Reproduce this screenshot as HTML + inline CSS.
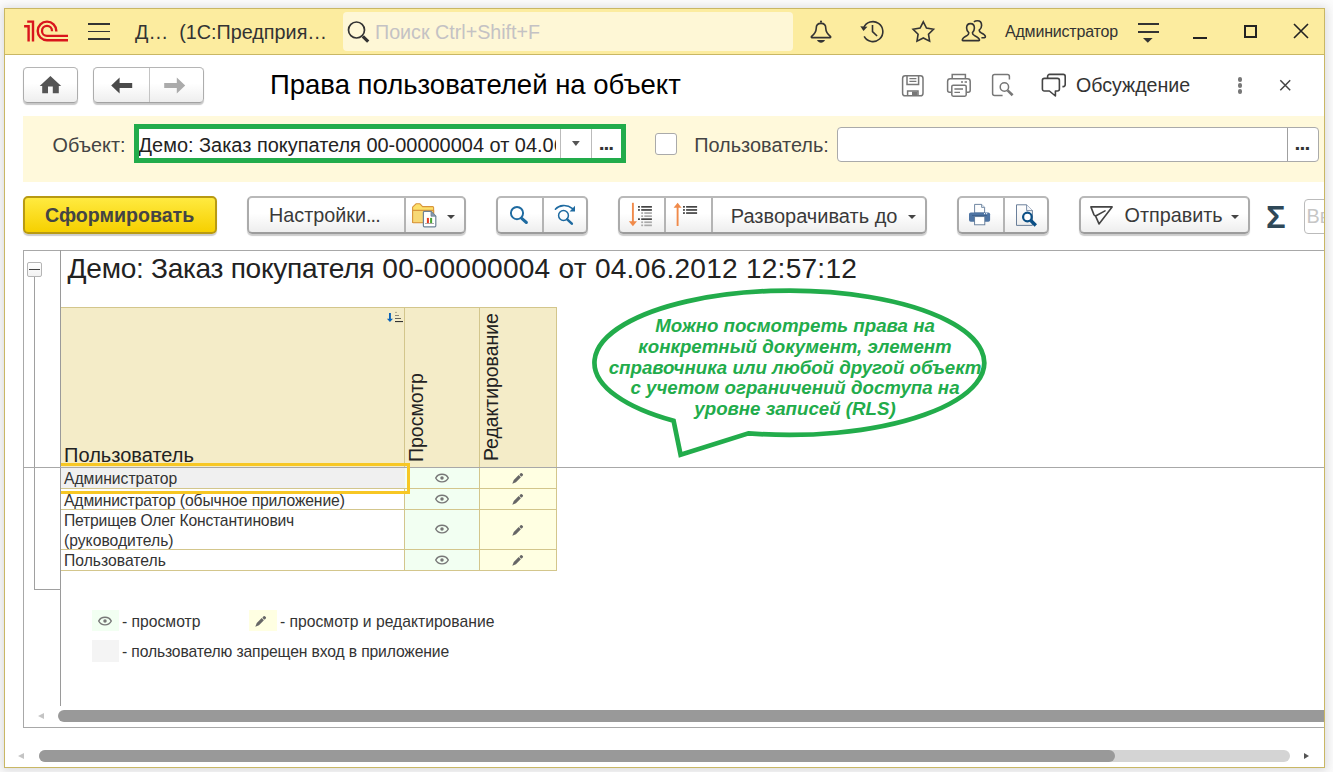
<!DOCTYPE html>
<html lang="ru">
<head>
<meta charset="utf-8">
<title>Права пользователей на объект</title>
<style>
html,body{margin:0;padding:0;}
body{width:1333px;height:772px;overflow:hidden;background:#fcfcfc;font-family:"Liberation Sans",sans-serif;color:#222;position:relative;}
.abs{position:absolute;}
#win{position:absolute;left:4px;top:8px;width:1319px;height:758px;background:#fff;border:1px solid #c9b764;box-shadow:0 1px 9px 2px rgba(60,60,72,.17);overflow:hidden;}
#inner{position:absolute;left:-5px;top:-9px;width:1333px;height:772px;}
#tbar{left:5px;top:9px;width:1320px;height:45px;background:#fcec9f;border-bottom:1px solid #c9b764;}
.t{position:absolute;white-space:nowrap;line-height:1;}
.btn{position:absolute;box-sizing:border-box;border:2px solid #ababab;border-top-color:#b9b9b9;border-bottom-color:#9c9c9c;border-radius:5px;background:linear-gradient(#ffffff 45%,#eeeeee);box-shadow:0 1.5px 1px rgba(0,0,0,.2);}
.btn.n{border-width:1px;border-color:#adadad;border-top-color:#b5b5b5;border-bottom-color:#a2a2a2;border-radius:4.5px;box-shadow:0 1.2px 1px rgba(0,0,0,.22);}
.sep{position:absolute;width:2px;background:#b4b4b4;}
svg{position:absolute;overflow:visible;}
.tri{width:0;height:0;border-left:4.4px solid transparent;border-right:4.4px solid transparent;border-top:4.6px solid #444;}
.hl{position:absolute;height:1px;}
.vl{position:absolute;width:1px;}
</style>
</head>
<body>
<div id="win"><div id="inner">

<!-- ===== title bar ===== -->
<div class="abs" id="tbar"></div>
<div class="abs" style="left:343px;top:12px;width:450px;height:39px;background:#fef7d6;border-radius:4px;"></div>

<!-- 1C logo -->
<svg style="left:22px;top:19px;" width="48" height="24" viewBox="0 0 48 24">
<g fill="none" stroke="#d9151c" stroke-width="2.4">
<path d="M2.1 7.3 L6.6 7.3 L6.6 22.6"/>
<path d="M5.2 2.6 L11 2.6 L11 22.6"/>
<path d="M34.3 12.4 L34.3 11.9 A9.3 9.3 0 1 0 25 21.2 L46 21.2"/>
<path d="M30 12.2 L30 11.9 A5 5 0 1 0 25 16.9 L46 16.9" stroke-width="2.3"/>
</g>
</svg>
<!-- hamburger -->
<div class="abs" style="left:88px;top:23px;width:22px;height:1.6px;background:#333;"></div>
<div class="abs" style="left:88px;top:30.6px;width:22px;height:1.6px;background:#333;"></div>
<div class="abs" style="left:88px;top:38.2px;width:22px;height:1.6px;background:#333;"></div>
<!-- search magnifier -->
<svg style="left:345px;top:19px;" width="28" height="26" viewBox="0 0 28 26">
<circle cx="11.5" cy="11" r="8" fill="none" stroke="#333" stroke-width="1.7"/>
<path d="M17.8 17.4 L23.2 22.6" stroke="#333" stroke-width="3.2" stroke-linecap="butt"/>
</svg>
<!-- bell -->
<svg style="left:808px;top:19px;" width="26" height="26" viewBox="0 0 26 26">
<circle cx="13" cy="2.7" r="1.1" fill="#333"/>
<path d="M8.2 9.4 C8.2 6 10.2 4.4 13 4.4 C15.8 4.4 17.8 6 17.8 9.4 C17.8 13.2 19.4 14.8 22.4 17.4 C22.9 17.9 22.7 18.6 22 18.6 L4 18.6 C3.3 18.6 3.1 17.9 3.6 17.4 C6.6 14.8 8.2 13.2 8.2 9.4 Z" fill="none" stroke="#333" stroke-width="1.6" stroke-linejoin="round"/>
<path d="M8.9 21.1 L17.1 21.1 C16 23 14.6 23.8 13 23.8 C11.4 23.8 10 23 8.9 21.1 Z" fill="#333"/>
</svg>
<!-- history -->
<svg style="left:858px;top:18px;" width="28" height="28" viewBox="0 0 28 28">
<path d="M5.62 10.03 A9.95 9.95 0 1 1 6.17 18.38" fill="none" stroke="#333" stroke-width="1.6"/>
<path d="M2.3 8.2 L9.4 8.7 L5.5 13 Z" fill="#333"/>
<path d="M14.5 7.1 L14.5 13.7 L19.1 18" fill="none" stroke="#333" stroke-width="1.6"/>
</svg>
<!-- star -->
<svg style="left:909.5px;top:18.5px;" width="26" height="26" viewBox="0 0 26 26">
<path d="M13.3 2.8 L16.5 9.1 L23.5 10.2 L18.5 15.2 L19.6 22.2 L13.3 19.0 L7.0 22.2 L8.1 15.2 L3.1 10.2 L10.1 9.1 Z" fill="none" stroke="#333" stroke-width="1.6" stroke-linejoin="miter"/>
</svg>
<!-- users -->
<svg style="left:960px;top:19px;" width="28" height="26" viewBox="0 0 28 26">
<path d="M13.9 2.9 C14.8 2.2 16 1.8 17.4 1.8 C20 1.8 21.6 3.8 21.6 6.4 C21.6 8.4 20.6 10 19.2 11.2 C19.2 12.6 19.8 13.2 21.4 14 C24 15.2 25.4 16 25.4 17.8 C25.4 18.4 25 18.8 24.4 18.8 L21.4 18.8" fill="none" stroke="#333" stroke-width="1.6" stroke-linejoin="round"/>
<path d="M10.5 4.6 C13 4.6 14.4 6.6 14.4 9 C14.4 11 13.6 12.6 12.4 13.8 C12.4 15.2 13 15.8 14.6 16.6 C17.6 18 19.4 18.8 19.5 21 C19.5 21.4 19.3 21.6 18.9 21.6 L2.9 21.6 C2.5 21.6 2.3 21.4 2.3 21 C2.4 18.8 4.2 18 7 16.6 C8.4 15.8 8.8 15.2 8.8 13.8 C7.6 12.6 6.6 11 6.6 9 C6.6 6.6 8 4.6 10.5 4.6 Z" fill="none" stroke="#333" stroke-width="1.6" stroke-linejoin="round"/>
</svg>
<!-- menu -->
<div class="abs" style="left:1137.5px;top:23px;width:21px;height:1.8px;background:#333;"></div>
<div class="abs" style="left:1137.5px;top:31.3px;width:21px;height:1.8px;background:#333;"></div>
<svg style="left:1143.4px;top:38.2px;" width="10" height="5" viewBox="0 0 10 5"><path d="M0 0 L9.6 0 L4.8 4.8 Z" fill="#333"/></svg>
<!-- window controls -->
<div class="abs" style="left:1193.3px;top:36.6px;width:13.6px;height:2.2px;background:#222;"></div>
<div class="abs" style="left:1244px;top:25px;width:13px;height:13px;box-sizing:border-box;border:2px solid #222;"></div>
<svg style="left:1293px;top:23px;" width="16" height="16" viewBox="0 0 16 16"><path d="M1 1 L15 15 M15 1 L1 15" stroke="#222" stroke-width="1.6"/></svg>

<div class="t" style="left:135px;top:22.5px;font-size:19.8px;color:#333;">Д…&nbsp; (1С:Предприя…</div>
<div class="t" style="left:375px;top:22.5px;font-size:19.7px;color:#c4c2c4;">Поиск Ctrl+Shift+F</div>
<div class="t" style="left:1005px;top:24px;font-size:16px;color:#333;letter-spacing:-0.2px;">Администратор</div>

<!-- ===== nav row ===== -->
<div class="btn n" style="left:23px;top:67px;width:55px;height:35.6px;"></div>
<div class="btn n" style="left:93px;top:67px;width:111px;height:35.6px;"></div>
<div class="sep" style="left:149px;top:68px;height:34px;width:1px;background:#c4c4c4;"></div>

<svg style="left:39px;top:75px;" width="23" height="19" viewBox="0 0 23 19">
<path d="M11.4 1.1 L22.2 11 L19.8 11 L19.8 18.2 L13.8 18.2 L13.8 11.6 L9 11.6 L9 18.2 L3.2 18.2 L3.2 11 L0.7 11 Z" fill="#555"/>
</svg>
<svg style="left:111px;top:77px;" width="22" height="17" viewBox="0 0 22 17">
<path d="M0.2 8.4 L8.6 0.4 L8.6 5.9 L21.2 5.9 L21.2 10.9 L8.6 10.9 L8.6 16.4 Z" fill="#4a4a4a"/>
</svg>
<svg style="left:164px;top:77px;" width="22" height="17" viewBox="0 0 22 17">
<path d="M21.2 8.4 L12.8 0.4 L12.8 5.9 L0.2 5.9 L0.2 10.9 L12.8 10.9 L12.8 16.4 Z" fill="#ababab"/>
</svg>
<!-- save -->
<svg style="left:901px;top:74px;" width="24" height="24" viewBox="0 0 24 24">
<g fill="none" stroke="#777" stroke-width="1.5">
<rect x="1.6" y="1.8" width="20.4" height="20" rx="2.6"/>
<path d="M6 2 L6 10.4 L17.6 10.4 L17.6 2"/>
<path d="M8.4 4.6 L15.4 4.6 M8.4 7.4 L15.4 7.4" stroke-width="1.3"/>
<path d="M6.6 21.6 L6.6 17 L17 17 L17 21.6"/>
</g>
<rect x="11" y="17.6" width="5.4" height="3.8" fill="#777"/>
</svg>
<!-- printer -->
<svg style="left:946px;top:73px;" width="26" height="25" viewBox="0 0 26 25">
<g fill="none" stroke="#777" stroke-width="1.5">
<path d="M6.2 5.6 L6.2 1.6 L19.4 1.6 L19.4 5.6"/>
<path d="M5.6 19.2 L3.6 19.2 C2.4 19.2 1.6 18.4 1.6 17.2 L1.6 8.4 C1.6 6.8 2.6 5.8 4.2 5.8 L21.6 5.8 C23.2 5.8 24.2 6.8 24.2 8.4 L24.2 17.2 C24.2 18.4 23.4 19.2 22.2 19.2 L20.4 19.2"/>
<rect x="5.8" y="12.2" width="14.4" height="11" rx="1.4"/>
<path d="M8.4 16 L17 16 M8.4 19.4 L14 19.4 M15 9 L17 9 M18.6 9 L21 9" stroke-width="1.3"/>
</g>
</svg>
<!-- preview -->
<svg style="left:991px;top:73px;" width="24" height="25" viewBox="0 0 24 25">
<g fill="none" stroke="#777">
<path d="M11.6 22.6 L3.6 22.6 C2.4 22.6 1.6 21.8 1.6 20.6 L1.6 3.6 C1.6 2.4 2.4 1.6 3.6 1.6 L16.4 1.6 C17.6 1.6 18.4 2.4 18.4 3.6 L18.4 6.6" stroke-width="1.5"/>
<circle cx="13.4" cy="14" r="4.2" stroke-width="1.5"/>
<path d="M16.6 17.4 L21.6 22.2" stroke-width="2.6"/>
</g>
</svg>
<!-- chat -->
<svg style="left:1041px;top:73.4px;" width="26" height="26" viewBox="0 0 26 26">
<g fill="none" stroke="#444" stroke-width="1.6" stroke-linejoin="round">
<path d="M6.6 5.2 L6.6 3.4 C6.6 2.2 7.4 1.4 8.6 1.4 L22.2 1.4 C23.4 1.4 24.2 2.2 24.2 3.4 L24.2 11.6 C24.2 12.8 23.4 13.6 22.2 13.6 L21.4 13.6"/>
<path d="M3.4 5.4 L16.4 5.4 C17.6 5.4 18.4 6.2 18.4 7.4 L18.4 16 C18.4 17.2 17.6 18 16.4 18 L14.4 18 L14.4 23 L8.4 18 L3.4 18 C2.2 18 1.4 17.2 1.4 16 L1.4 7.4 C1.4 6.2 2.2 5.4 3.4 5.4 Z"/>
</g>
</svg>
<!-- kebab -->
<div class="abs" style="left:1237.5px;top:77px;width:4.8px;height:4.8px;border-radius:50%;background:#777;"></div>
<div class="abs" style="left:1237.5px;top:83.1px;width:4.8px;height:4.8px;border-radius:50%;background:#777;"></div>
<div class="abs" style="left:1237.5px;top:89.3px;width:4.8px;height:4.8px;border-radius:50%;background:#777;"></div>
<svg style="left:1280px;top:80.3px;" width="11" height="11" viewBox="0 0 11 11"><path d="M0.3 0.3 L10.2 10.2 M10.2 0.3 L0.3 10.2" stroke="#444" stroke-width="1.5"/></svg>

<div class="t" style="left:270px;top:71.4px;font-size:27.5px;color:#000;">Права пользователей на объект</div>
<div class="t" style="left:1076px;top:76.3px;font-size:19.6px;color:#333;">Обсуждение</div>

<!-- ===== filter band ===== -->
<div class="abs" style="left:23px;top:116px;width:1302px;height:66px;background:#fff9db;"></div>
<div class="t" style="left:52.6px;top:135.7px;font-size:19.8px;color:#444;">Объект:</div>
<div class="abs" style="left:134px;top:124px;width:492px;height:39px;box-sizing:border-box;border:5px solid #22ac4b;background:#fff;"></div>
<div class="t" style="left:138.6px;top:135.7px;font-size:19.95px;color:#222;width:417.4px;overflow:hidden;">Демо: Заказ покупателя 00-00000004 от 04.06.2012</div>
<div class="sep" style="left:560px;top:129px;height:29px;width:1px;background:#bbb;"></div>
<div class="sep" style="left:591px;top:129px;height:29px;width:1px;background:#bbb;"></div>
<div class="abs" style="left:655px;top:133px;width:22px;height:22px;box-sizing:border-box;border:1px solid #aaa;border-radius:3px;background:#fff;"></div>
<div class="t" style="left:694.2px;top:135.7px;font-size:19.9px;color:#444;">Пользователь:</div>
<div class="abs" style="left:837px;top:127px;width:482px;height:35px;box-sizing:border-box;border:1px solid #aaa;border-radius:4px;background:#fff;"></div>
<div class="sep" style="left:1287px;top:128px;height:33px;width:1px;background:#a0a0a0;"></div>

<svg style="left:571.6px;top:141.2px;" width="8" height="5" viewBox="0 0 8 5"><path d="M0 0 L7.8 0 L3.9 5 Z" fill="#555"/></svg>
<div class="t" style="left:598.8px;top:132.3px;font-size:21px;font-weight:bold;color:#333;letter-spacing:-1.14px;">...</div>
<div class="t" style="left:1294.4px;top:132.3px;font-size:21px;font-weight:bold;color:#333;letter-spacing:-0.84px;">...</div>


<!-- ===== command bar ===== -->
<div class="btn" style="left:23px;top:196px;width:194px;height:37.6px;background:linear-gradient(#ffea40,#f6d000);border-color:#b89a12;"></div>
<div class="t" style="left:45px;top:205.5px;font-size:19.6px;font-weight:bold;color:#444;">Сформировать</div>
<div class="btn" style="left:247px;top:196px;width:219px;height:37.6px;"></div>
<div class="sep" style="left:404px;top:198px;height:34px;"></div>
<div class="t" style="left:269px;top:205.5px;font-size:19.8px;color:#3a3a3a;">Настройки<span style="letter-spacing:-0.9px">...</span></div>
<div class="btn" style="left:496px;top:196px;width:92px;height:37.6px;"></div>
<div class="sep" style="left:542px;top:198px;height:34px;"></div>
<div class="btn" style="left:618px;top:196px;width:309px;height:37.6px;"></div>
<div class="sep" style="left:664px;top:198px;height:34px;"></div>
<div class="sep" style="left:711px;top:198px;height:34px;"></div>
<div class="t" style="left:730.8px;top:205.5px;font-size:20px;color:#3a3a3a;">Разворачивать до</div>
<div class="btn" style="left:957px;top:196px;width:92px;height:37.6px;"></div>
<div class="sep" style="left:1003px;top:198px;height:34px;"></div>
<div class="btn" style="left:1079px;top:196px;width:171px;height:37.6px;"></div>
<div class="t" style="left:1124.5px;top:205.5px;font-size:19.8px;color:#3a3a3a;">Отправить</div>
<div class="t" style="left:1266.2px;top:201.6px;font-size:31.2px;font-weight:bold;color:#2f4858;transform-origin:0 50%;transform:scaleX(1.05);">Σ</div>
<div class="abs" style="left:1304px;top:199px;width:60px;height:35px;box-sizing:border-box;border:1px solid #bbb;border-radius:4px;background:#fff;"></div>
<div class="t" style="left:1306.5px;top:207px;font-size:19.8px;color:#c6c6c6;">Вв</div>

<!-- folder with chart -->
<svg style="left:411px;top:202px;" width="27" height="26" viewBox="0 0 27 26">
<path d="M1.6 20.4 L1.6 5.2 L5 1.8 L9 1.8 L11.6 4.6 L21.6 4.6 C22.2 4.6 22.6 5 22.6 5.6 L22.6 20.4 Z" fill="#fde06a" stroke="#d8953c" stroke-width="1.1" stroke-linejoin="round"/>
<path d="M1.6 8.4 L22.6 8.4 L22.6 20.4 C22.6 20.6 22.4 20.8 22.2 20.8 L2.4 20.8 C1.9 20.8 1.6 20.5 1.6 20 Z" fill="#f7d876" stroke="#d8953c" stroke-width="1.1" stroke-linejoin="round"/>
<path d="M13.4 9.4 L20 9.4 L24.8 14.2 L24.8 23.8 C24.8 24.4 24.4 24.8 23.8 24.8 L13.4 24.8 C12.8 24.8 12.4 24.4 12.4 23.8 L12.4 10.4 C12.4 9.8 12.8 9.4 13.4 9.4 Z" fill="#fff" stroke="#6d8296" stroke-width="1.2"/>
<path d="M20 9.4 L20 14.2 L24.8 14.2 Z" fill="#8a9cae" stroke="#6d8296" stroke-width="0.8"/>
<rect x="15.9" y="15.9" width="2" height="5.3" fill="#e8391f"/>
<rect x="19.1" y="15.9" width="2" height="5.3" fill="#4aa535"/>
<rect x="14" y="21" width="9" height="0.8" fill="#999"/>
</svg>
<div class="abs tri" style="left:447px;top:214.6px;"></div>
<!-- search -->
<svg style="left:509px;top:204px;" width="22" height="22" viewBox="0 0 22 22">
<circle cx="8" cy="9.1" r="6.1" fill="none" stroke="#1e6aa0" stroke-width="1.9"/>
<path d="M12.7 14.4 L17.4 18.5" stroke="#1e6aa0" stroke-width="3" stroke-linecap="round"/>
</svg>
<svg style="left:553px;top:202px;" width="26" height="26" viewBox="0 0 26 26">
<circle cx="10.5" cy="13.5" r="4.9" fill="none" stroke="#1e6aa0" stroke-width="1.5"/>
<path d="M14.2 17.4 L18.8 21.6" stroke="#1e6aa0" stroke-width="2.6" stroke-linecap="round"/>
<path d="M2.4 7.2 C6 3 13.6 2 19.6 6.6" fill="none" stroke="#1e6aa0" stroke-width="1.6" stroke-linecap="round"/>
<path d="M22 3.8 L22 9.6 L16.6 9.6 Z" fill="#1e6aa0"/>
</svg>
<!-- expand / collapse -->
<svg style="left:627px;top:201px;" width="30" height="28" viewBox="0 0 30 28">
<path d="M5.9 1.8 L5.9 21" stroke="#f08a4a" stroke-width="1.9"/>
<path d="M1.8 20.2 L10 20.2 L5.9 25.2 Z" fill="#f08a4a"/>
<g fill="#444">
<rect x="11" y="5" width="1.9" height="1.7"/><rect x="14.2" y="5" width="10.7" height="1.7"/>
<rect x="11" y="8.1" width="1.9" height="1.7"/><rect x="14.2" y="8.1" width="10.7" height="1.7"/>
<rect x="11" y="17.3" width="1.9" height="1.7"/><rect x="14.2" y="17.3" width="10.7" height="1.7"/>
</g>
<g fill="#aaa">
<rect x="14.2" y="11.2" width="1.9" height="1.7"/><rect x="17.3" y="11.2" width="7.6" height="1.7"/>
<rect x="14.2" y="14.3" width="1.9" height="1.7"/><rect x="17.3" y="14.3" width="7.6" height="1.7"/>
<rect x="14.2" y="20.4" width="1.9" height="1.7"/><rect x="17.3" y="20.4" width="7.6" height="1.7"/>
<rect x="14.2" y="23.5" width="1.9" height="1.7"/><rect x="17.3" y="23.5" width="7.6" height="1.7"/>
</g>
</svg>
<svg style="left:672px;top:201px;" width="30" height="28" viewBox="0 0 30 28">
<path d="M5.6 6 L5.6 25" stroke="#f08a4a" stroke-width="1.9"/>
<path d="M1.6 6.8 L9.6 6.8 L5.6 1.8 Z" fill="#f08a4a"/>
<g fill="#444">
<rect x="11" y="5" width="1.9" height="1.7"/><rect x="14.1" y="5" width="11" height="1.7"/>
<rect x="11" y="8.1" width="1.9" height="1.7"/><rect x="14.1" y="8.1" width="11" height="1.7"/>
<rect x="11" y="11.2" width="1.9" height="1.7"/><rect x="14.1" y="11.2" width="11" height="1.7"/>
</g>
</svg>
<div class="abs tri" style="left:907.5px;top:214.6px;"></div>
<!-- print -->
<svg style="left:967px;top:202px;" width="26" height="26" viewBox="0 0 26 26">
<path d="M7.6 2.4 L14.6 2.4 L17.6 5.4 L17.6 11 L7.6 11 Z" fill="#fdfdfd" stroke="#5f7896" stroke-width="0.9"/>
<path d="M14.6 2.4 L14.6 5.4 L17.6 5.4" fill="#e4ecf5" stroke="#5f7896" stroke-width="0.8"/>
<rect x="2" y="10.4" width="21.1" height="9.4" rx="1.8" fill="#4e74a3"/>
<rect x="5" y="13.1" width="15" height="0.9" fill="#3c5f8c"/>
<rect x="7.6" y="14.6" width="10.2" height="8.2" fill="#fff" stroke="#5f7896" stroke-width="0.9"/>
<rect x="17" y="11.1" width="1.1" height="1.1" fill="#fff"/><rect x="19.1" y="11.1" width="1.1" height="1.1" fill="#fff"/>
</svg>
<!-- print preview -->
<svg style="left:1014px;top:201px;" width="26" height="28" viewBox="0 0 26 28">
<defs><linearGradient id="dg" x1="0" y1="0" x2="0" y2="1"><stop offset="0" stop-color="#fff"/><stop offset="1" stop-color="#eeeeee"/></linearGradient></defs>
<path d="M2.5 3.8 L12.6 3.8 L18.4 9.6 L18.4 24.4 L2.5 24.4 Z" fill="url(#dg)" stroke="#5a7290" stroke-width="0.9"/>
<path d="M12.6 3.8 L12.6 9.6 L18.4 9.6" fill="#f4f7fb" stroke="#5a7290" stroke-width="0.8"/>
<circle cx="13.4" cy="16" r="4.3" fill="#fff" stroke="#0b4f85" stroke-width="2.2"/>
<path d="M16.8 19.6 L21.8 24.4" stroke="#0b4f85" stroke-width="3.4" stroke-linecap="butt"/>
</svg>
<!-- send -->
<svg style="left:1088px;top:203px;" width="27" height="24" viewBox="0 0 27 24">
<path d="M2.9 3.9 L24.1 3.9 L11 20.9 L7.5 12.9 M2.9 3.9 L5.9 11.6 Q6.9 13.4 9 12.3 L17 7.9" fill="none" stroke="#444" stroke-width="1.6" stroke-linejoin="round" stroke-linecap="round"/>
</svg>
<div class="abs tri" style="left:1230.6px;top:214.6px;"></div>


<!-- ===== report ===== -->
<!--REPORT-START-->
<!-- frame -->
<div class="hl" style="left:23px;top:250px;width:1310px;background:#a8a8a8;"></div>
<div class="vl" style="left:23px;top:250px;height:478px;background:#a8a8a8;"></div>
<div class="hl" style="left:23px;top:727px;width:1310px;background:#a8a8a8;"></div>
<div class="vl" style="left:60px;top:250px;height:456px;background:#9a9a9a;"></div>
<!-- group lines -->
<div class="vl" style="left:34px;top:276px;height:314px;background:#a0a0a0;"></div>
<div class="hl" style="left:34px;top:589px;width:27px;background:#a0a0a0;"></div>
<div class="abs" style="left:27px;top:262px;width:15px;height:15px;box-sizing:border-box;border:1px solid #b5b5b5;border-radius:2px;background:linear-gradient(#fff,#f2f2f2);"></div>
<div class="hl" style="left:29px;top:269px;width:11px;background:#444;"></div>

<div class="t" style="left:67.6px;top:255px;font-size:28.1px;color:#222;"><span style="letter-spacing:-0.3px">Демо: Заказ покупателя</span><span style="letter-spacing:0.235px"> 00-00000004 от 04.06.2012 12:57:12</span></div>

<!-- table header -->
<div class="abs" style="left:61px;top:307px;width:496px;height:160px;background:#f4ecc8;"></div>
<div class="hl" style="left:61px;top:307px;width:496px;background:#d3c68c;"></div>
<div class="vl" style="left:404px;top:307px;height:264px;background:#d3c68c;"></div>
<div class="vl" style="left:479px;top:307px;height:264px;background:#d3c68c;"></div>
<div class="vl" style="left:556px;top:307px;height:264px;background:#d3c68c;"></div>
<div class="t" style="left:64.1px;top:444.7px;font-size:20px;color:#222;">Пользователь</div>
<div class="t" id="vh1" style="left:406.4px;top:462.2px;font-size:20.3px;color:#222;transform-origin:0 0;transform:rotate(-90deg) scaleX(.96);">Просмотр</div>
<div class="t" id="vh2" style="left:481.3px;top:460.9px;font-size:20.3px;color:#222;transform-origin:0 0;transform:rotate(-90deg) scaleX(.957);">Редактирование</div>

<svg style="left:386px;top:311px;" width="18" height="12" viewBox="0 0 18 12">
<rect x="3" y="2" width="1.9" height="6.4" fill="#0b63b8"/>
<path d="M0.9 7.8 L7 7.8 L3.95 11 Z" fill="#0b63b8"/>
<rect x="9" y="0.9" width="2" height="1" fill="#b0aa90"/>
<rect x="9" y="4" width="4" height="1" fill="#8a8676"/>
<rect x="9" y="7" width="6" height="1" fill="#66645a"/>
<rect x="9" y="10" width="8" height="1.1" fill="#333"/>
</svg>
<!-- body cells -->
<div class="abs" style="left:61px;top:467px;width:344px;height:21px;background:#f0f0f0;"></div>
<div class="abs" style="left:405px;top:467px;width:74px;height:104px;background:#f2fff2;"></div>
<div class="abs" style="left:480px;top:467px;width:76px;height:104px;background:#ffffe2;"></div>
<div class="hl" style="left:61px;top:488px;width:496px;background:#d3c68c;"></div>
<div class="hl" style="left:61px;top:509px;width:496px;background:#d3c68c;"></div>
<div class="hl" style="left:61px;top:549px;width:496px;background:#d3c68c;"></div>
<div class="hl" style="left:61px;top:570px;width:496px;background:#d3c68c;"></div>
<div class="hl" style="left:23px;top:467px;width:1310px;background:#a8a8a8;"></div>
<div class="t" style="left:64px;top:471.1px;font-size:15.7px;color:#333;">Администратор</div>
<div class="t" style="left:64px;top:492.8px;font-size:15.7px;letter-spacing:-0.12px;color:#333;">Администратор (обычное приложение)</div>
<div class="t" style="left:64px;top:512.8px;font-size:15.7px;letter-spacing:-0.2px;color:#333;">Петрищев Олег Константинович</div>
<div class="t" style="left:64px;top:532.7px;font-size:15.7px;color:#333;">(руководитель)</div>
<div class="t" style="left:64px;top:553.1px;font-size:15.7px;color:#333;">Пользователь</div>
<svg style="left:435.2px;top:473px;" width="14" height="10" viewBox="0 0 14 10"><path d="M0.7 5 C3.2 -0.1 10.8 -0.1 13.3 5 C10.8 10.1 3.2 10.1 0.7 5 Z" fill="none" stroke="#777" stroke-width="1.4"/><circle cx="7" cy="5" r="1.75" fill="#777"/></svg>
<svg style="left:512.3px;top:473.4px;" width="11" height="11" viewBox="0 0 11 11"><g transform="translate(0.3,10.7) rotate(-45)" fill="#666"><path d="M0 0 L3.6 -1.55 L10.6 -1.55 L10.6 1.55 L3.6 1.55 Z"/><rect x="11.3" y="-1.55" width="2.9" height="3.1" rx="0.9"/></g></svg>
<svg style="left:435.2px;top:494px;" width="14" height="10" viewBox="0 0 14 10"><path d="M0.7 5 C3.2 -0.1 10.8 -0.1 13.3 5 C10.8 10.1 3.2 10.1 0.7 5 Z" fill="none" stroke="#777" stroke-width="1.4"/><circle cx="7" cy="5" r="1.75" fill="#777"/></svg>
<svg style="left:512.3px;top:494.4px;" width="11" height="11" viewBox="0 0 11 11"><g transform="translate(0.3,10.7) rotate(-45)" fill="#666"><path d="M0 0 L3.6 -1.55 L10.6 -1.55 L10.6 1.55 L3.6 1.55 Z"/><rect x="11.3" y="-1.55" width="2.9" height="3.1" rx="0.9"/></g></svg>
<svg style="left:435.2px;top:524.1px;" width="14" height="10" viewBox="0 0 14 10"><path d="M0.7 5 C3.2 -0.1 10.8 -0.1 13.3 5 C10.8 10.1 3.2 10.1 0.7 5 Z" fill="none" stroke="#777" stroke-width="1.4"/><circle cx="7" cy="5" r="1.75" fill="#777"/></svg>
<svg style="left:512.3px;top:524.5px;" width="11" height="11" viewBox="0 0 11 11"><g transform="translate(0.3,10.7) rotate(-45)" fill="#666"><path d="M0 0 L3.6 -1.55 L10.6 -1.55 L10.6 1.55 L3.6 1.55 Z"/><rect x="11.3" y="-1.55" width="2.9" height="3.1" rx="0.9"/></g></svg>
<svg style="left:435.2px;top:554.9px;" width="14" height="10" viewBox="0 0 14 10"><path d="M0.7 5 C3.2 -0.1 10.8 -0.1 13.3 5 C10.8 10.1 3.2 10.1 0.7 5 Z" fill="none" stroke="#777" stroke-width="1.4"/><circle cx="7" cy="5" r="1.75" fill="#777"/></svg>
<svg style="left:512.3px;top:555.3px;" width="11" height="11" viewBox="0 0 11 11"><g transform="translate(0.3,10.7) rotate(-45)" fill="#666"><path d="M0 0 L3.6 -1.55 L10.6 -1.55 L10.6 1.55 L3.6 1.55 Z"/><rect x="11.3" y="-1.55" width="2.9" height="3.1" rx="0.9"/></g></svg>
<!-- selection -->
<div class="abs" style="left:61px;top:462.5px;width:349px;height:31.5px;box-sizing:border-box;border:3px solid #f7c724;border-left-width:0;"></div>

<!-- legend -->
<div class="abs" style="left:92px;top:610px;width:27px;height:21px;background:#f2fff2;"></div>
<div class="abs" style="left:249px;top:610px;width:28px;height:21px;background:#ffffe2;"></div>
<div class="abs" style="left:92px;top:640px;width:27px;height:22px;background:#f4f4f4;"></div>
<svg style="left:97.8px;top:616.2px;" width="14" height="10" viewBox="0 0 14 10"><path d="M0.7 5 C3.2 -0.1 10.8 -0.1 13.3 5 C10.8 10.1 3.2 10.1 0.7 5 Z" fill="none" stroke="#777" stroke-width="1.4"/><circle cx="7" cy="5" r="1.75" fill="#777"/></svg>
<svg style="left:254.8px;top:616px;" width="11" height="11" viewBox="0 0 11 11"><g transform="translate(0.3,10.7) rotate(-45)" fill="#666"><path d="M0 0 L3.6 -1.55 L10.6 -1.55 L10.6 1.55 L3.6 1.55 Z"/><rect x="11.3" y="-1.55" width="2.9" height="3.1" rx="0.9"/></g></svg>
<div class="t" style="left:122px;top:613.5px;font-size:15.7px;color:#333;">- просмотр</div>
<div class="t" style="left:280px;top:613.5px;font-size:15.7px;color:#333;">- просмотр и редактирование</div>
<div class="t" style="left:122px;top:643.5px;font-size:15.7px;letter-spacing:-0.14px;color:#333;">- пользователю запрещен вход в приложение</div>

<!-- bubble -->
<svg style="left:0;top:0;" width="1333" height="772" viewBox="0 0 1333 772">
<path d="M673.6 420.8 A194.9 72.15 0 1 1 748.5 433.3 L680.6 454.8 Z" fill="#fff" stroke="#22ac4b" stroke-width="4.7" stroke-linejoin="miter"/>
</svg>
<div class="abs" id="bub" style="left:594.8px;top:316.3px;width:400px;text-align:center;font-size:17.6px;line-height:20.7px;transform:scaleX(1.062);transform-origin:50% 50%;font-weight:bold;font-style:italic;color:#22ac4b;white-space:nowrap;">Можно посмотреть права на<br>конкретный документ, элемент<br>справочника или любой другой объект<br>с учетом ограничений доступа на<br>уровне записей (RLS)</div>

<!-- scrollbars -->
<div class="abs" style="left:58px;top:710px;width:1290px;height:12px;border-radius:6px;background:#999;"></div>
<div class="abs" style="left:37.5px;top:712.8px;width:0;height:0;border-top:3.5px solid transparent;border-bottom:3.5px solid transparent;border-right:6px solid #c4c4c4;"></div>
<div class="abs" style="left:39px;top:750px;width:1251px;height:12px;border-radius:6px;background:#d4d4d4;"></div>
<div class="abs" style="left:39px;top:750px;width:1076px;height:12px;border-radius:6px;background:#999;"></div>
<div class="abs" style="left:18px;top:752.8px;width:0;height:0;border-top:3.5px solid transparent;border-bottom:3.5px solid transparent;border-right:6px solid #c4c4c4;"></div>
<div class="abs" style="left:1304px;top:753px;width:0;height:0;border-top:3.5px solid transparent;border-bottom:3.5px solid transparent;border-left:5.6px solid #555;"></div>
<!--REPORT-END-->

</div></div>
</body>
</html>
